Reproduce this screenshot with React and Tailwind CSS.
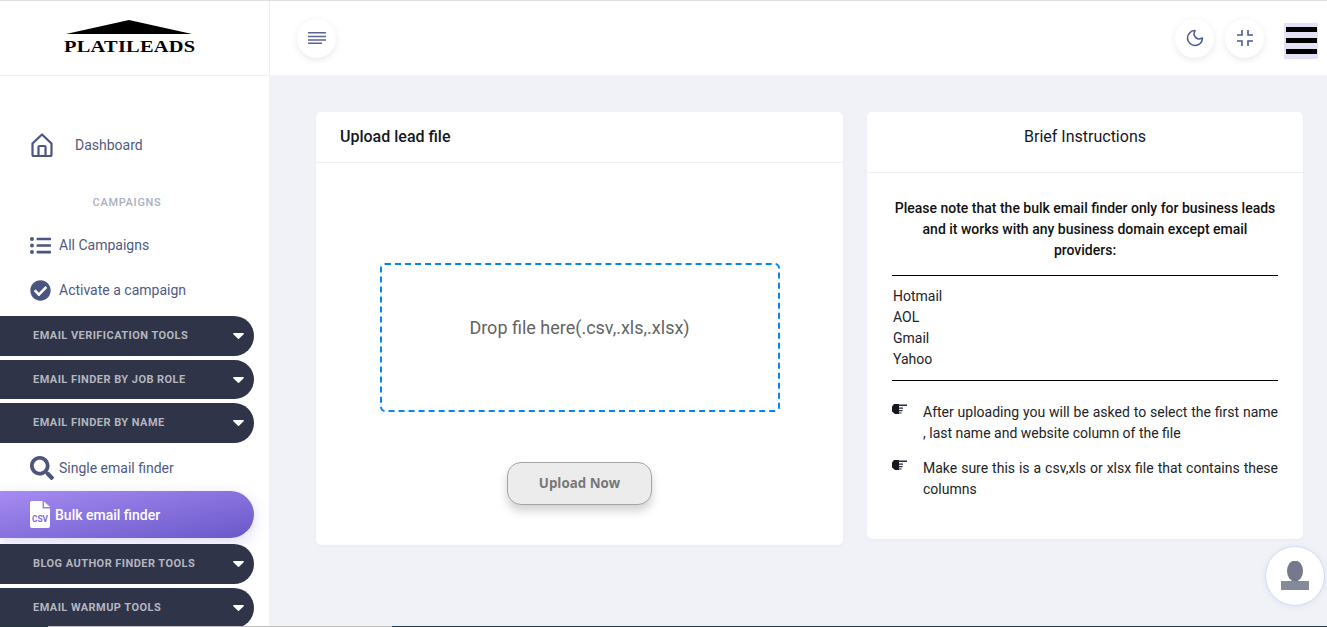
import { FaListUl, FaCheckCircle, FaSearch } from "react-icons/fa";
import { Moon } from "lucide-react";

const DarkPill = ({ label, className }) => (
    <div className={`flex items-center justify-between w-[254px] rounded-r-[20px] bg-[#2f3449] pl-[33px] pr-[10px] text-[11px] font-bold tracking-[0.45px] uppercase text-[#b4b6bf] ${className}`}>
        <span className="pt-[1px]">{label}</span>
        <svg width="11" height="6" viewBox="0 0 11 6" className="block">
            <path d="M0.8 0h9.4a.7.7 0 0 1 .5 1.2L6 5.8a.7.7 0 0 1-1 0L.3 1.2A.7.7 0 0 1 .8 0z" fill="#fff" />
        </svg>
    </div>
)

const NavLink = ({ icon, label, className }) => (
    <div className={`flex items-center pl-[30px] text-[14px] text-[#50597f] ${className}`}>
        {icon}
        <span>{label}</span>
    </div>
)

const Sidebar = () => (
    <aside className="flex-none w-[270px] h-full bg-white border-r border-[#eeeff2] flex flex-col overflow-hidden">
        <div className="flex-none h-[75px] border-b border-[#eeeff2] flex flex-col items-center pt-[19px]">
            <svg width="126" height="14" viewBox="0 0 126 14" className="block ml-[-11px]">
                <polygon points="0,14 63,0 126,14" fill="#000" />
            </svg>
            <div className="mt-[6px] ml-[-9px] h-[14px] leading-[14px] font-['Liberation_Serif'] font-bold text-[17px] text-black tracking-[0.2px] scale-x-[1.2]">PLATILEADS</div>
        </div>

        <NavLink
            className="mt-[55px] h-[28px] flex-none"
            label={<span className="ml-[21px]">Dashboard</span>}
            icon={
                <svg width="24" height="26" viewBox="0 0 24 26" fill="none" stroke="#4a5580" strokeWidth="2.2" strokeLinejoin="round">
                    <path d="M2.5 11.5 12 2.5l9.5 9v11a1.5 1.5 0 0 1-1.5 1.5H4a1.5 1.5 0 0 1-1.5-1.5z" />
                    <path d="M8.5 24v-9a1 1 0 0 1 1-1h5a1 1 0 0 1 1 1v9" />
                </svg>
            }
        />
        <div className="mt-[37px] h-[14px] leading-[14px] flex-none text-center text-[11px] font-medium tracking-[0.7px] text-[#a9afc0] mr-[15px]">CAMPAIGNS</div>
        <NavLink
            className="mt-[19px] h-[32px] flex-none"
            label={<span className="ml-[8px]">All Campaigns</span>}
            icon={<FaListUl className="text-[21px] text-[#4a5580]" />}
        />
        <NavLink
            className="mt-[13px] h-[32px] flex-none"
            label={<span className="ml-[8px]">Activate a campaign</span>}
            icon={<FaCheckCircle className="text-[21px] text-[#4a5580]" />}
        />
        <DarkPill label="Email Verification Tools" className="mt-[10px] h-[40px] flex-none" />
        <DarkPill label="Email Finder by Job Role" className="mt-[4px] h-[39px] flex-none" />
        <DarkPill label="Email Finder by Name" className="mt-[4px] h-[40px] flex-none" />
        <NavLink
            className="mt-[9px] h-[32px] flex-none"
            label={<span className="ml-[5px]">Single email finder</span>}
            icon={<FaSearch className="text-[24px] text-[#4a5580]" />}
        />
        <div className="mt-[7px] h-[47px] flex-none w-[254px] rounded-r-[24px] bg-gradient-to-br from-[#a78bf2] to-[#6a58c9] shadow-[0_4px_14px_rgba(120,100,220,0.25)] flex items-center pl-[30px] text-[14px] font-medium text-white">
            <svg width="20" height="27" viewBox="0 0 20 27">
                <path d="M2 0h10.5v7.5H20V25a2 2 0 0 1-2 2H2a2 2 0 0 1-2-2V2a2 2 0 0 1 2-2z" fill="#fff" />
                <path d="M14 0.5 20 6h-6z" fill="#fff" />
                <text x="10" y="21" textAnchor="middle" fontSize="9.5" fontWeight="700" fontFamily="Roboto, sans-serif" textLength="16" lengthAdjust="spacingAndGlyphs" fill="#7d68d8">CSV</text>
            </svg>
            <span className="ml-[5px] pt-[1px]">Bulk email finder</span>
        </div>
        <DarkPill label="Blog Author Finder Tools" className="mt-[6px] h-[40px] flex-none" />
        <DarkPill label="Email Warmup Tools" className="mt-[4px] h-[40px] flex-none" />
    </aside>
)

const RoundButton = ({ children }) => (
    <button className="w-[39px] h-[39px] rounded-full bg-white shadow-[0_2px_6px_rgba(60,70,110,0.12)] flex items-center justify-center text-[#4a5a90]">
        {children}
    </button>
)

const MinimizeIcon = () => (
    <svg width="18" height="18" viewBox="0 0 18 18" fill="none" stroke="currentColor" strokeWidth="1.6">
        <path d="M6 1v5H1M12 1v5h5M6 17v-5H1M12 17v-5h5" />
    </svg>
)

const Topbar = () => (
    <header className="flex-none h-[74px] bg-white flex items-center pl-[27px] pr-[9px]">
        <RoundButton>
            <svg width="18" height="12" viewBox="0 0 18 12" className="text-[#5a6590]">
                <path d="M0 .7h18M0 4.4h18M0 8h18M0 11.3h14" stroke="currentColor" strokeWidth="1.5" />
            </svg>
        </RoundButton>
        <div className="ml-auto flex items-center">
            <RoundButton><Moon size={20} strokeWidth={1.8} /></RoundButton>
            <div className="w-[11px]" />
            <RoundButton><MinimizeIcon /></RoundButton>
            <button className="ml-[20px] mt-[6px] w-[34px] h-[36px] bg-[#e4e0f5] flex flex-col justify-between items-center pt-[4px] pb-[5px]">
                <span className="block w-[31px] h-[5px] bg-black" />
                <span className="block w-[31px] h-[5px] bg-black" />
                <span className="block w-[31px] h-[5px] bg-black" />
            </button>
        </div>
    </header>
)

const HandIcon = () => (
    <svg width="15" height="12" viewBox="0 0 15 12" className="block">
        <path d="M0 3.5 2 1h5v10H3L0 8.5z" fill="#15171f" />
        <path d="M6 1.5h9v1.6H6zM7 4.6h4v1.2H7zM7 7h3.5v1.2H7zM6 9.4h3.5v1.2H6z" fill="#2a2c38" />
    </svg>
)

const UploadCard = () => (
    <section className="w-[527px] h-[433px] flex-none rounded-[5px] bg-white shadow-[0_1px_3px_rgba(60,70,110,0.05)]">
        <div className="h-[51px] border-b border-[#eeeff2] pl-[24px] flex items-center text-[16px] font-medium text-[#15171f]">Upload lead file</div>
        <div className="flex flex-col items-center pt-[100px]">
            <div className="w-[400px] h-[149px] rounded-[5px] border-2 border-dashed border-[#0087f7] flex items-center justify-center pb-[21px] text-[18px] text-[#646464]">
                Drop file here(.csv,.xls,.xlsx)
            </div>
            <button className="mt-[50px] w-[145px] h-[43px] rounded-[14px] bg-[#ececec] border border-[#a5a5a5] shadow-[0_6px_10px_rgba(0,0,0,0.18)] font-['Open_Sans'] font-bold text-[13.33px] text-[#777]">
                Upload Now
            </button>
        </div>
    </section>
)

const InstructionsCard = () => (
    <section className="w-[436px] h-[427px] flex-none rounded-[5px] bg-white shadow-[0_1px_3px_rgba(60,70,110,0.05)]">
        <div className="h-[61px] border-b border-[#eeeff2] flex items-center justify-center pb-[10px] text-[16px] text-[#15171f]">Brief Instructions</div>
        <div className="px-[25px] pt-[25px] text-[14px] leading-[21px] text-[#212329]">
            <p className="text-center font-medium text-[#111] pb-[14px] border-b border-black">
                Please note that the bulk email finder only for business leads and it works with any business domain except email providers:
            </p>
            <ul className="pt-[10px] pb-[10px] pl-[1px] border-b border-black">
                <li>Hotmail</li>
                <li>AOL</li>
                <li>Gmail</li>
                <li>Yahoo</li>
            </ul>
            <div className="flex mt-[21px]">
                <span className="w-[31px] flex-none mt-[1px]"><HandIcon /></span>
                <p className="text-justify">After uploading you will be asked to select the first name , last name and website column of the file</p>
            </div>
            <div className="flex mt-[14px]">
                <span className="w-[31px] flex-none mt-[1px]"><HandIcon /></span>
                <p className="text-justify">Make sure this is a csv,xls or xlsx file that contains these columns</p>
            </div>
        </div>
    </section>
)

const App = () => {
    return (
        <div className="relative w-[1327px] h-[627px] overflow-hidden bg-[#f0f2f8] font-['Roboto',sans-serif] border-t border-[#e0e0e0] flex">
            <Sidebar />
            <div className="flex-1 flex flex-col min-w-0">
                <Topbar />
                <main className="flex gap-[24px] items-start pl-[46px] pt-[37px]">
                    <UploadCard />
                    <InstructionsCard />
                </main>
            </div>
            {/* chat bubble */}
            <div className="absolute right-[2px] bottom-[21px] w-[60px] h-[60px] rounded-full bg-white border border-[#cfdcf5] shadow-[0_1px_6px_rgba(60,70,110,0.08)] flex flex-col items-center justify-center">
                <svg width="28" height="30" viewBox="0 0 28 30">
                    <ellipse cx="14" cy="10" rx="8" ry="10.5" fill="#747a8c" />
                    <rect x="0" y="20" width="28" height="9" fill="#858a99" />
                </svg>
            </div>
            <div className="absolute left-0 right-0 bottom-0 h-[1px] flex">
                <div className="w-[48px] bg-[#1f3a3f]" />
                <div className="w-[344px] bg-[#bfbfbf]" />
                <div className="flex-1 bg-[#1f3a4a]" />
            </div>
        </div>
    )
}

export default App;
